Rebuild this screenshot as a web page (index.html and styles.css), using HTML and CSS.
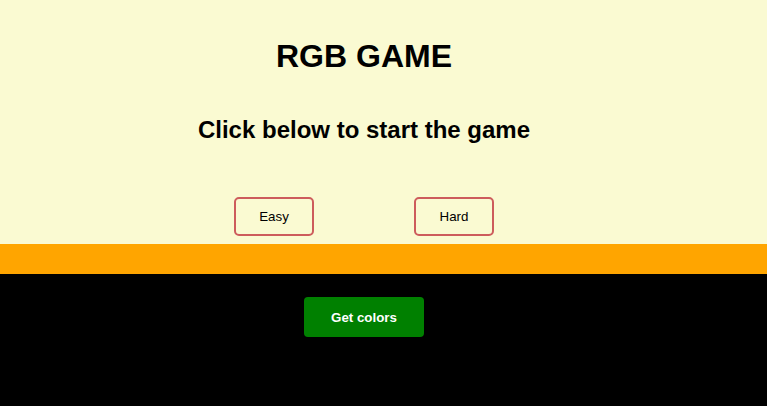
FILE: index.html
```html
<!DOCTYPE html>
<html lang="en">
<head>
<meta charset="utf-8">
<title>RGB Game</title>
<link rel="stylesheet" href="styles.css">
</head>
<body>
  <header class="top">
    <div class="wrap">
      <h1 class="title">RGB GAME</h1>
      <h2 class="subtitle">Click below to start the game</h2>
      <div class="modes">
        <button class="mode">Easy</button>
        <button class="mode">Hard</button>
      </div>
    </div>
  </header>
  <div class="stripe"></div>
  <main class="bottom">
    <div class="wrap">
      <button class="get">Get colors</button>
    </div>
  </main>
</body>
</html>
```

FILE: styles.css
```css
html, body {
  margin: 0;
  padding: 0;
}
body {
  background: #000;
  font-family: "Liberation Sans", Arial, sans-serif;
  color: #000;
  min-height: 406px;
}
.wrap {
  width: 728px;
  text-align: center;
}
.top {
  display: flow-root;
  background: #fafad2;
  padding: 0 0 8px;
}
.title {
  margin: 38px 0 0;
  font-size: 32px;
  line-height: 37px;
  font-weight: bold;
}
.subtitle {
  margin: 41px 0 0;
  font-size: 24px;
  line-height: 28px;
  font-weight: bold;
}
.modes {
  margin-top: 53px;
  display: flex;
  justify-content: center;
  gap: 100px;
}
.mode {
  box-sizing: border-box;
  width: 80px;
  height: 39px;
  background: transparent;
  border: 2px solid #cd5c5c;
  border-radius: 5px;
  font-family: "Liberation Sans", Arial, sans-serif;
  font-size: 13.33px;
  color: #000;
  padding: 0;
}
.stripe {
  height: 30px;
  background: #ffa500;
}
.bottom {
  padding-top: 23px;
}
.get {
  box-sizing: border-box;
  width: 120px;
  height: 40px;
  background: #008000;
  color: #fff;
  border: none;
  border-radius: 4px;
  font-family: "Liberation Sans", Arial, sans-serif;
  font-size: 13.33px;
  font-weight: bold;
  padding: 0;
}
```
